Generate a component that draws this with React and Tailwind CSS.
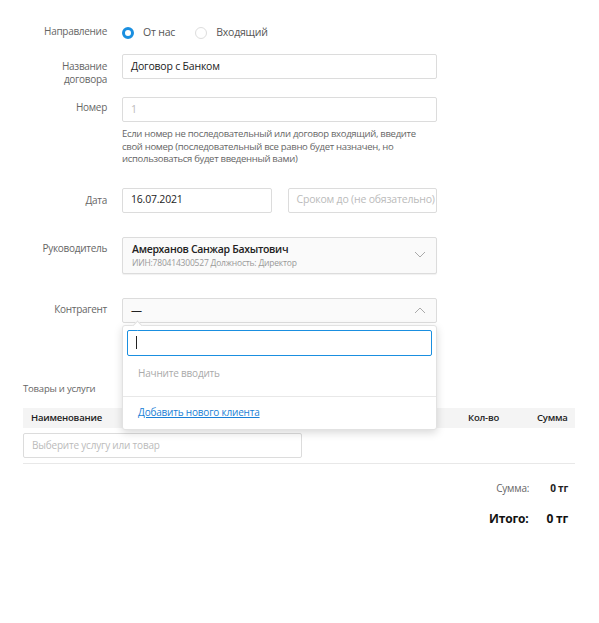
import React from 'react'

const font = { fontFamily: '"Open Sans", "Noto Sans", sans-serif' }

function Label({ children, className = '' }) {
  return (
    <div className={`w-[84px] shrink-0 text-right text-[10px] leading-[13px] tracking-[-0.3px] text-[#666] ${className}`}>
      {children}
    </div>
  )
}

function Chevron({ up = false }) {
  return (
    <svg width="12" height="8" viewBox="0 0 12 8" className="text-[#aaa]">
      <path d={up ? 'M1 7L6 2L11 7' : 'M1 1L6 6L11 1'} fill="none" stroke="currentColor" strokeWidth="1" />
    </svg>
  )
}

function Radio({ checked, label }) {
  return (
    <label className="flex items-center gap-[9px] text-[10.5px] tracking-[-0.2px] text-[#555]">
      {checked ? (
        <span className="h-[12px] w-[12px] rounded-full border-[3.5px] border-[#1a8fe0] bg-white" />
      ) : (
        <span className="h-[12px] w-[12px] rounded-full border border-[#ddd] bg-white" />
      )}
      {label}
    </label>
  )
}

export default function App() {
  return (
    <div style={font} className="min-h-[623px] w-[599px] bg-white px-[23px] pt-[24px] text-[#333]">
      {/* Направление */}
      <div className="flex h-[18px] items-center gap-[15px]">
        <Label className="-mt-[3px]">Направление</Label>
        <div className="flex items-center gap-[20px]">
          <Radio checked label="От нас" />
          <Radio label="Входящий" />
        </div>
      </div>

      {/* Название договора */}
      <div className="mt-[12px] flex h-[25px] items-start gap-[15px]">
        <Label className="pt-[6px]">Название договора</Label>
        <div className="flex h-[25px] w-[315px] items-center rounded-[2px] border border-[#dcdcdc] px-[8px] text-[10.5px] tracking-[-0.2px] text-[#222]">
          Договор с Банком
        </div>
      </div>

      {/* Номер */}
      <div className="mt-[18px] flex gap-[15px]">
        <Label className="pt-[4px]">Номер</Label>
        <div className="w-[315px]">
          <div className="flex h-[25px] items-center rounded-[2px] border border-[#dcdcdc] px-[8px] text-[10.5px] text-[#bbb]">
            1
          </div>
          <p className="mt-[6px] text-[9.5px] leading-[12.5px] tracking-[-0.3px] text-[#666]">
            Если номер не последовательный или договор входящий, введите свой номер (последовательный все равно будет назначен, но использоваться будет введенный вами)
          </p>
        </div>
      </div>

      {/* Дата */}
      <div className="mt-[22px] flex gap-[15px]">
        <Label className="pt-[6px]">Дата</Label>
        <div className="flex w-[315px] gap-[16px]">
          <div className="flex h-[25px] w-[150px] items-center rounded-[2px] border border-[#dcdcdc] px-[8px] text-[10.5px] tracking-[-0.2px] text-[#222]">
            16.07.2021
          </div>
          <div className="flex h-[25px] w-[150px] items-center overflow-hidden whitespace-nowrap rounded-[2px] border border-[#dcdcdc] px-[8px] text-[10.5px] tracking-[-0.2px] text-[#bbb]">
            Сроком до (не обязательно)
          </div>
        </div>
      </div>

      {/* Руководитель */}
      <div className="mt-[24px] flex gap-[15px]">
        <Label className="pt-[5px]">Руководитель</Label>
        <div className="flex h-[37px] w-[315px] items-center justify-between rounded-[2px] border border-[#dcdcdc] bg-[#fafafa] pl-[9px] pr-[10px] shadow-[0_1px_1px_rgba(0,0,0,0.06)]">
          <div>
            <div className="text-[10.5px] font-semibold leading-[14px] tracking-[-0.3px] text-[#222]">Амерханов Санжар Бахытович</div>
            <div className="text-[8.5px] leading-[13px] tracking-[-0.2px] text-[#999]">ИИН:780414300527 Должность: Директор</div>
          </div>
          <Chevron />
        </div>
      </div>

      {/* Контрагент */}
      <div className="mt-[24px] flex gap-[15px]">
        <Label className="pt-[5px]">Контрагент</Label>
        <div className="relative w-[315px]">
          <div className="flex h-[25px] items-center justify-between rounded-[2px] border border-[#dcdcdc] bg-[#fafafa] pl-[8px] pr-[10px] text-[11px] text-[#222]">
            <span>—</span>
            <Chevron up />
          </div>
          {/* dropdown */}
          <div className="absolute left-0 top-[27px] z-10 w-[315px] rounded-[3px] border border-[#e2e2e2] bg-white shadow-[0_3px_8px_rgba(0,0,0,0.15)]">
            <div className="absolute -top-[4px] left-[11px] h-[7px] w-[7px] rotate-45 border-l border-t border-[#e2e2e2] bg-white" />
            <div className="px-[4px] pt-[4px]">
              <div className="flex h-[26px] items-center rounded-[2px] border border-[#1a8fe0] px-[8px]">
                <span className="h-[13px] w-px bg-[#222]" />
              </div>
            </div>
            <div className="px-[15px] pb-[15px] pt-[10px] text-[10px] tracking-[-0.2px] text-[#aaa]">Начните вводить</div>
            <div className="border-t border-[#e8e8e8] px-[15px] pb-[9px] pt-[8px] text-[10px] tracking-[-0.2px] text-[#1a7fd6] underline">
              Добавить нового клиента
            </div>
          </div>
        </div>
      </div>

      {/* Товары и услуги */}
      <div className="mt-[59px] text-[9.5px] tracking-[-0.2px] text-[#666]">Товары и услуги</div>
      <div className="mt-[12px] w-[552px]">
        <div className="flex h-[20px] items-center bg-[#f4f4f4] text-[9.5px] font-semibold tracking-[-0.2px] text-[#222]">
          <div className="flex-1 pl-[8px]">Наименование</div>
          <div className="w-[69px]">Кол-во</div>
          <div className="w-[38px]">Сумма</div>
        </div>
        <div className="pb-[5px] pt-[5px]">
          <div className="flex h-[25px] w-[279px] items-center rounded-[2px] border border-[#dcdcdc] px-[8px] text-[10px] tracking-[-0.2px] text-[#bbb]">
            Выберите услугу или товар
          </div>
        </div>
        <div className="border-t border-[#e8e8e8]" />
        <div className="mt-[17px] flex justify-end pr-[7px] text-[10px] tracking-[-0.2px]">
          <span className="text-[#666]">Сумма:</span>
          <span className="ml-[21px] font-bold text-[#222]">0 тг</span>
        </div>
        <div className="mt-[14px] flex justify-end pr-[7px] text-[12px] font-bold tracking-[-0.2px] text-[#111]">
          <span>Итого:</span>
          <span className="ml-[18px]">0 тг</span>
        </div>
      </div>
    </div>
  )
}
